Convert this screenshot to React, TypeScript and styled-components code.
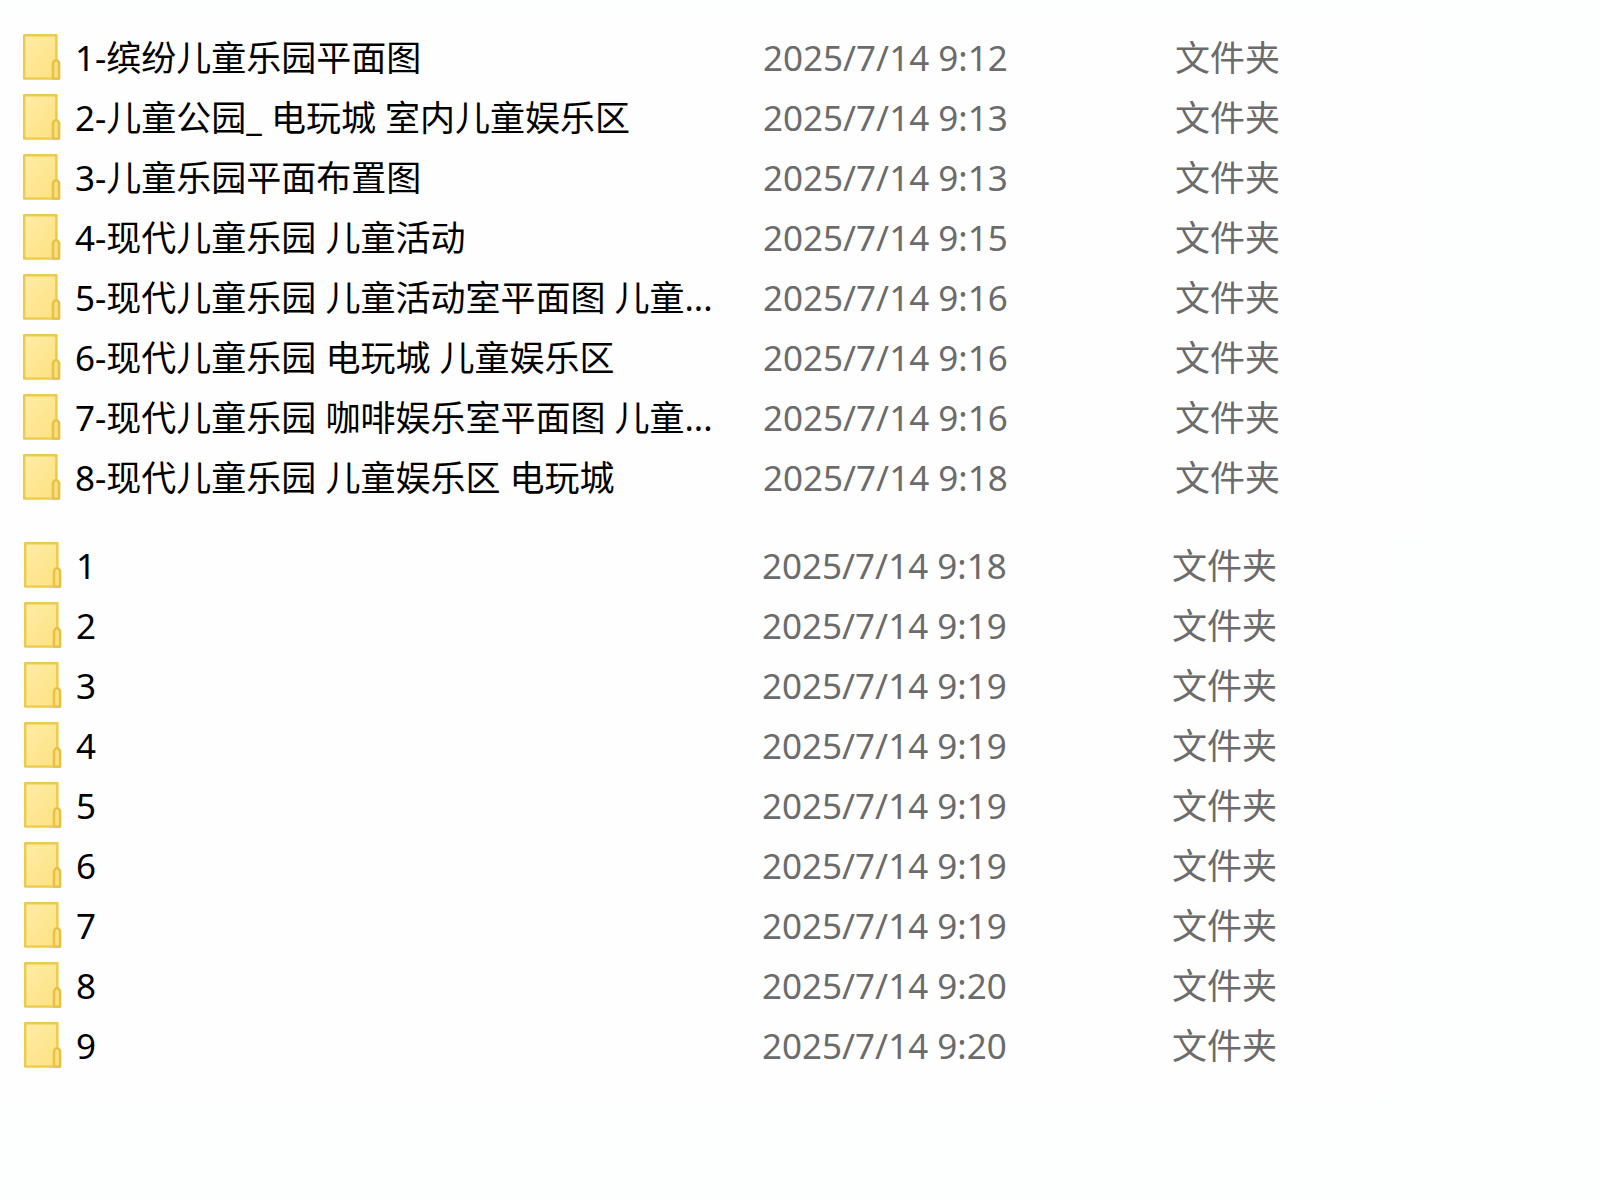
import React from "react";
import styled, { createGlobalStyle } from "styled-components";

const GlobalStyle = createGlobalStyle`
  *, *::before, *::after { box-sizing: border-box; }
  body { margin: 0; background: #fdfffe; }
`;

const Page = styled.main`
  min-height: 100vh;
  padding: 16px 0 76px;
  background: #fdfffe;
  font-family: "Noto Sans", "Noto Sans CJK SC", sans-serif;
  font-size: 35px;
  line-height: 48px;
  color: #000;
`;

const Panel = styled.section<{ $top: number; $right: number }>`
  margin-right: ${(p) => p.$right}px;
  padding: ${(p) => p.$top}px 0 28px;
  background: #fefefe;
`;

const Listing = styled.table<{ $inset: number }>`
  width: 100%;
  padding-left: ${(p) => p.$inset}px;
  table-layout: fixed;
  border-collapse: separate;
  border-spacing: 0;
`;

const Column = styled.col<{ $width?: number }>`
  width: ${(p) => (p.$width ? `${p.$width}px` : "auto")};
`;

const Row = styled.tr`
  height: 60px;
`;

const Cell = styled.td`
  padding: 2px 0 0;
  vertical-align: middle;
  white-space: nowrap;
  color: #6b6b6b;
`;

const NameCell = styled.th`
  padding: 0;
  vertical-align: middle;
  text-align: left;
  font-weight: 400;
  white-space: nowrap;
`;

const Entry = styled.div`
  display: flex;
  align-items: center;
  gap: 14px;
`;

const Name = styled.span`
  padding-top: 2px;
`;

const IconSvg = styled.svg`
  flex: none;
  display: block;
  width: 38px;
  height: 46px;
`;

const FolderIcon = () => (
  <IconSvg viewBox="0 0 38 46" aria-hidden="true">
    <defs>
      <linearGradient id="folder-face" x1="0" y1="0" x2="1" y2="1">
        <stop offset="0" stopColor="#ffeca6" />
        <stop offset="1" stopColor="#fde17f" />
      </linearGradient>
    </defs>
    <path
      d="M1.2 1.2H33.4V26L36 28.6V44.6H1.2Z"
      fill="url(#folder-face)"
      stroke="#edca48"
      strokeWidth="2.4"
      strokeLinejoin="round"
    />
    <path
      d="M30 44.6V28.8L31.6 26.4H34.4L36 28.8V44.6Z"
      fill="#fbdf80"
      stroke="#e6c143"
      strokeWidth="2.4"
      strokeLinejoin="round"
    />
  </IconSvg>
);

type Item = { name: string; modified: string };

const projects: Item[] = [
  { name: "1-缤纷儿童乐园平面图", modified: "2025/7/14 9:12" },
  { name: "2-儿童公园_ 电玩城 室内儿童娱乐区", modified: "2025/7/14 9:13" },
  { name: "3-儿童乐园平面布置图", modified: "2025/7/14 9:13" },
  { name: "4-现代儿童乐园 儿童活动", modified: "2025/7/14 9:15" },
  { name: "5-现代儿童乐园 儿童活动室平面图 儿童...", modified: "2025/7/14 9:16" },
  { name: "6-现代儿童乐园 电玩城 儿童娱乐区", modified: "2025/7/14 9:16" },
  { name: "7-现代儿童乐园 咖啡娱乐室平面图 儿童...", modified: "2025/7/14 9:16" },
  { name: "8-现代儿童乐园 儿童娱乐区 电玩城", modified: "2025/7/14 9:18" },
];

const numbered: Item[] = [
  { name: "1", modified: "2025/7/14 9:18" },
  { name: "2", modified: "2025/7/14 9:19" },
  { name: "3", modified: "2025/7/14 9:19" },
  { name: "4", modified: "2025/7/14 9:19" },
  { name: "5", modified: "2025/7/14 9:19" },
  { name: "6", modified: "2025/7/14 9:19" },
  { name: "7", modified: "2025/7/14 9:19" },
  { name: "8", modified: "2025/7/14 9:20" },
  { name: "9", modified: "2025/7/14 9:20" },
];

type FolderListProps = {
  items: Item[];
  inset: number;
  dateWidth: number;
  typeWidth: number;
};

const FolderList = ({ items, inset, dateWidth, typeWidth }: FolderListProps) => (
  <Listing $inset={inset}>
    <colgroup>
      <Column />
      <Column $width={dateWidth} />
      <Column $width={typeWidth} />
    </colgroup>
    <tbody>
      {items.map((item) => (
        <Row key={item.name}>
          <NameCell scope="row">
            <Entry>
              <FolderIcon />
              <Name>{item.name}</Name>
            </Entry>
          </NameCell>
          <Cell>{item.modified}</Cell>
          <Cell>文件夹</Cell>
        </Row>
      ))}
    </tbody>
  </Listing>
);

export default function App() {
  return (
    <>
      <GlobalStyle />
      <Page lang="zh-CN">
        <Panel $top={11} $right={183}>
          <FolderList items={projects} inset={23} dateWidth={412} typeWidth={242} />
        </Panel>
        <Panel $top={0} $right={216}>
          <FolderList items={numbered} inset={24} dateWidth={410} typeWidth={212} />
        </Panel>
      </Page>
    </>
  );
}
